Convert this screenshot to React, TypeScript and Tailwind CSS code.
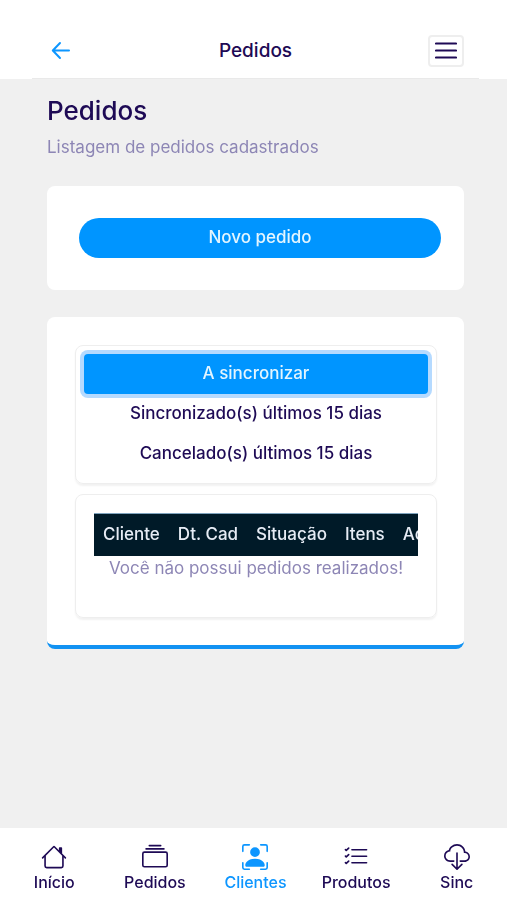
import { clsx } from 'clsx'
import type { IconType } from 'react-icons'
import {
  BsCloudDownload,
  BsCollection,
  BsHouse,
  BsListCheck,
  BsPersonBoundingBox,
} from 'react-icons/bs'

interface NavItem {
  label: string
  icon: IconType
  active?: boolean
}

const NAV_ITEMS: NavItem[] = [
  { label: 'Início', icon: BsHouse },
  { label: 'Pedidos', icon: BsCollection },
  { label: 'Clientes', icon: BsPersonBoundingBox, active: true },
  { label: 'Produtos', icon: BsListCheck },
  { label: 'Sinc', icon: BsCloudDownload },
]

const TABS = ['A sincronizar', 'Sincronizado(s) últimos 15 dias', 'Cancelado(s) últimos 15 dias']

const COLUMNS = ['Cliente', 'Dt. Cad', 'Situação', 'Itens', 'Ações']

function Header() {
  return (
    <header className="bg-white">
      <div className="grid h-[78px] grid-cols-[1fr_auto_1fr] items-center pt-6 pr-[43px] pl-[47px]">
        <a href="#voltar" aria-label="Voltar" className="justify-self-start p-1 text-[#0d96ff]">
          <svg
            className="h-5 w-5"
            viewBox="0 0 20 20"
            fill="none"
            stroke="currentColor"
            strokeWidth="2"
            strokeLinecap="round"
            strokeLinejoin="round"
          >
            <path d="M18 9.5H2M9 2 1.8 9.5 9 17" />
          </svg>
        </a>
        <span className="text-[19px] font-medium">Pedidos</span>
        <button
          type="button"
          aria-label="Menu"
          className="flex h-8 w-9 items-center justify-center justify-self-end rounded border-2 border-[#eeeeee]"
        >
          <svg
            className="h-5 w-[22px]"
            viewBox="0 0 22 20"
            fill="none"
            stroke="currentColor"
            strokeWidth="2.2"
            strokeLinecap="round"
          >
            <path d="M1 2.5h20M1 9.5h20M1 16.5h20" />
          </svg>
        </button>
      </div>
      <div className="mr-7 ml-8 h-px bg-[#e9e9e9]" />
    </header>
  )
}

function SyncTabs() {
  return (
    <div className="flex flex-col rounded-lg border border-[#eeeeee] p-2 pb-[9px] shadow-[0_2px_2px_#f2f2f2]">
      {TABS.map((tab, index) => (
        <button
          key={tab}
          type="button"
          className={clsx(
            'h-10 rounded text-[17px] font-medium',
            index === 0 && 'bg-[#0095ff] text-[#e3f5ff] ring-4 ring-[#b5daff]',
          )}
        >
          {tab}
        </button>
      ))}
    </div>
  )
}

function OrdersTable() {
  return (
    <div className="mt-2.5 h-[124px] rounded-lg border border-[#eeeeee] px-[18px] pt-[18px] shadow-[0_2px_2px_#f2f2f2]">
      {/* Wider than the card, scrolls sideways */}
      <div className="overflow-x-auto [scrollbar-width:none]">
        <table className="border-t border-[#7fa3bd] bg-[#001a28] text-left text-[17px] text-[#e6ecf5]">
          <thead>
            <tr className="h-[42px]">
              {COLUMNS.map((column) => (
                <th key={column} className="px-[9px] font-medium whitespace-nowrap">
                  {column}
                </th>
              ))}
            </tr>
          </thead>
        </table>
      </div>
      <p className="text-center text-[17px] leading-6 whitespace-nowrap text-[#8d86b5]">
        Você não possui pedidos realizados!
      </p>
    </div>
  )
}

function BottomNav() {
  return (
    <nav className="grid h-[72px] grid-cols-5 bg-white pt-4 pl-1">
      {NAV_ITEMS.map(({ label, icon: NavIcon, active }) => (
        <a
          key={label}
          href={`#${label}`}
          className={clsx('flex flex-col items-center', active && 'text-[#0d96ff]')}
        >
          <NavIcon className="h-[26px] w-[26px]" />
          <span className="text-base leading-6 font-medium">{label}</span>
        </a>
      ))}
    </nav>
  )
}

export default function App() {
  return (
    <div className="flex min-h-screen flex-col bg-[#f0f0f0] font-['Inter',sans-serif] text-[#1e0a55]">
      <Header />

      <main className="flex-1 pr-[43px] pb-8 pl-[47px]">
        <h1 className="pt-4 text-[26px] leading-8 font-medium">Pedidos</h1>
        <p className="mt-2 text-[17px] leading-6 text-[#8d86b5]">Listagem de pedidos cadastrados</p>

        <section className="mt-[27px] rounded-lg bg-white py-8 pr-[23px] pl-8">
          <button
            type="button"
            className="h-10 w-full rounded-full bg-[#0095ff] text-[17px] font-medium text-[#e3f5ff]"
          >
            Novo pedido
          </button>
        </section>

        <section className="mt-[27px] rounded-lg border-b-4 border-[#1292f2] bg-white pt-7 pr-[27px] pb-[27px] pl-7">
          <SyncTabs />
          <OrdersTable />
        </section>
      </main>

      <BottomNav />
    </div>
  )
}
